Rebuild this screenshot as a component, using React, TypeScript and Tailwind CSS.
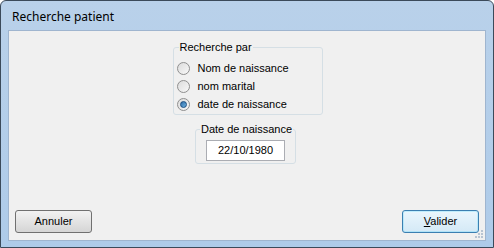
const FONT = { fontFamily: '"Liberation Sans", Arial, sans-serif' }

function Radio({ checked }: { checked?: boolean }) {
  return (
    <span className="relative flex h-[13px] w-[13px] shrink-0 items-center justify-center rounded-full border border-[#8f8f8f] bg-gradient-to-br from-[#dcdcdc] to-[#f8f8f8]">
      {checked && (
        <span className="h-[7px] w-[7px] rounded-full border border-[#1a4d80] bg-gradient-to-br from-[#2e6ea8] to-[#6fb1e0]" />
      )}
    </span>
  )
}

function Grip() {
  const dots = [
    [6, 0],
    [3, 3],
    [6, 3],
    [0, 6],
    [3, 6],
    [6, 6],
  ]
  return (
    <div className="absolute bottom-[1px] right-[1px] h-[9px] w-[9px]">
      {dots.map(([x, y]) => (
        <span
          key={`${x}-${y}`}
          className="absolute h-[2px] w-[2px] bg-[#b8c4d2]"
          style={{ left: x, top: y }}
        />
      ))}
    </div>
  )
}

export default function App() {
  return (
    <div className="h-[248px] w-[494px] overflow-hidden bg-white" style={FONT}>
      <div className="flex h-full w-full flex-col rounded-t-[6px] border border-[#3b4a5a] bg-gradient-to-b from-[#b9d1ea] to-[#aecbe9]">
        <div className="flex h-[29px] shrink-0 items-center pl-[11px] pt-[2px] text-[12px] text-black" style={{ fontFamily: '"Noto Sans", sans-serif' }}>
          Recherche patient
        </div>
        <div className="relative mx-[7px] mb-[6px] flex flex-1 flex-col border border-[#9fb5cf] bg-[#f0f0f0] text-[11px] text-black">
          <div className="flex flex-col items-center pt-[9px]">
            <fieldset className="ml-[1px] w-[150px] rounded-[3px] border border-[#d5dfe5] pb-[3px] pl-[2px] pr-0">
              <legend className="ml-[3px] whitespace-nowrap px-[1px] text-[11px] leading-[14px]">Recherche par</legend>
              <div className="flex flex-col gap-[5px] pt-[8px]">
                <label className="flex items-center gap-[8px] pl-[1px]">
                  <Radio />
                  <span className="leading-[13px]">Nom de naissance</span>
                </label>
                <label className="flex items-center gap-[8px] pl-[1px]">
                  <Radio />
                  <span className="leading-[13px]">nom marital</span>
                </label>
                <label className="flex items-center gap-[8px] pl-[1px]">
                  <Radio checked />
                  <span className="leading-[13px]">date de naissance</span>
                </label>
              </div>
            </fieldset>
            <fieldset className="mr-[3px] mt-[7px] flex w-[100px] flex-col items-center rounded-[3px] border border-[#d5dfe5] px-[2px] pb-[2px] pt-[4px]">
              <legend className="ml-[2px] whitespace-nowrap px-[1px] text-[11px] leading-[14px]">Date de naissance</legend>
              <div className="flex h-[21px] w-[79px] items-center justify-center border border-[#abadb3] bg-white text-[11px]">
                22/10/1980
              </div>
            </fieldset>
          </div>
          <div className="mt-auto flex items-end justify-between pb-[7px] pl-[6px] pr-[6px]">
            <button className="flex h-[23px] w-[77px] items-center justify-center rounded-[3px] border border-[#707070] bg-gradient-to-b from-[#f2f2f2] to-[#d5d5d5] text-[11px]">
              Annuler
            </button>
            <button className="flex h-[23px] w-[77px] items-center justify-center rounded-[3px] border border-[#3c7fb1] bg-gradient-to-b from-[#eaf6fd] to-[#d4e9f6] text-[11px] shadow-[inset_0_0_0_1px_#48d5fd40]">
              <span><span className="underline">V</span>alider</span>
            </button>
          </div>
          <Grip />
        </div>
      </div>
    </div>
  )
}
